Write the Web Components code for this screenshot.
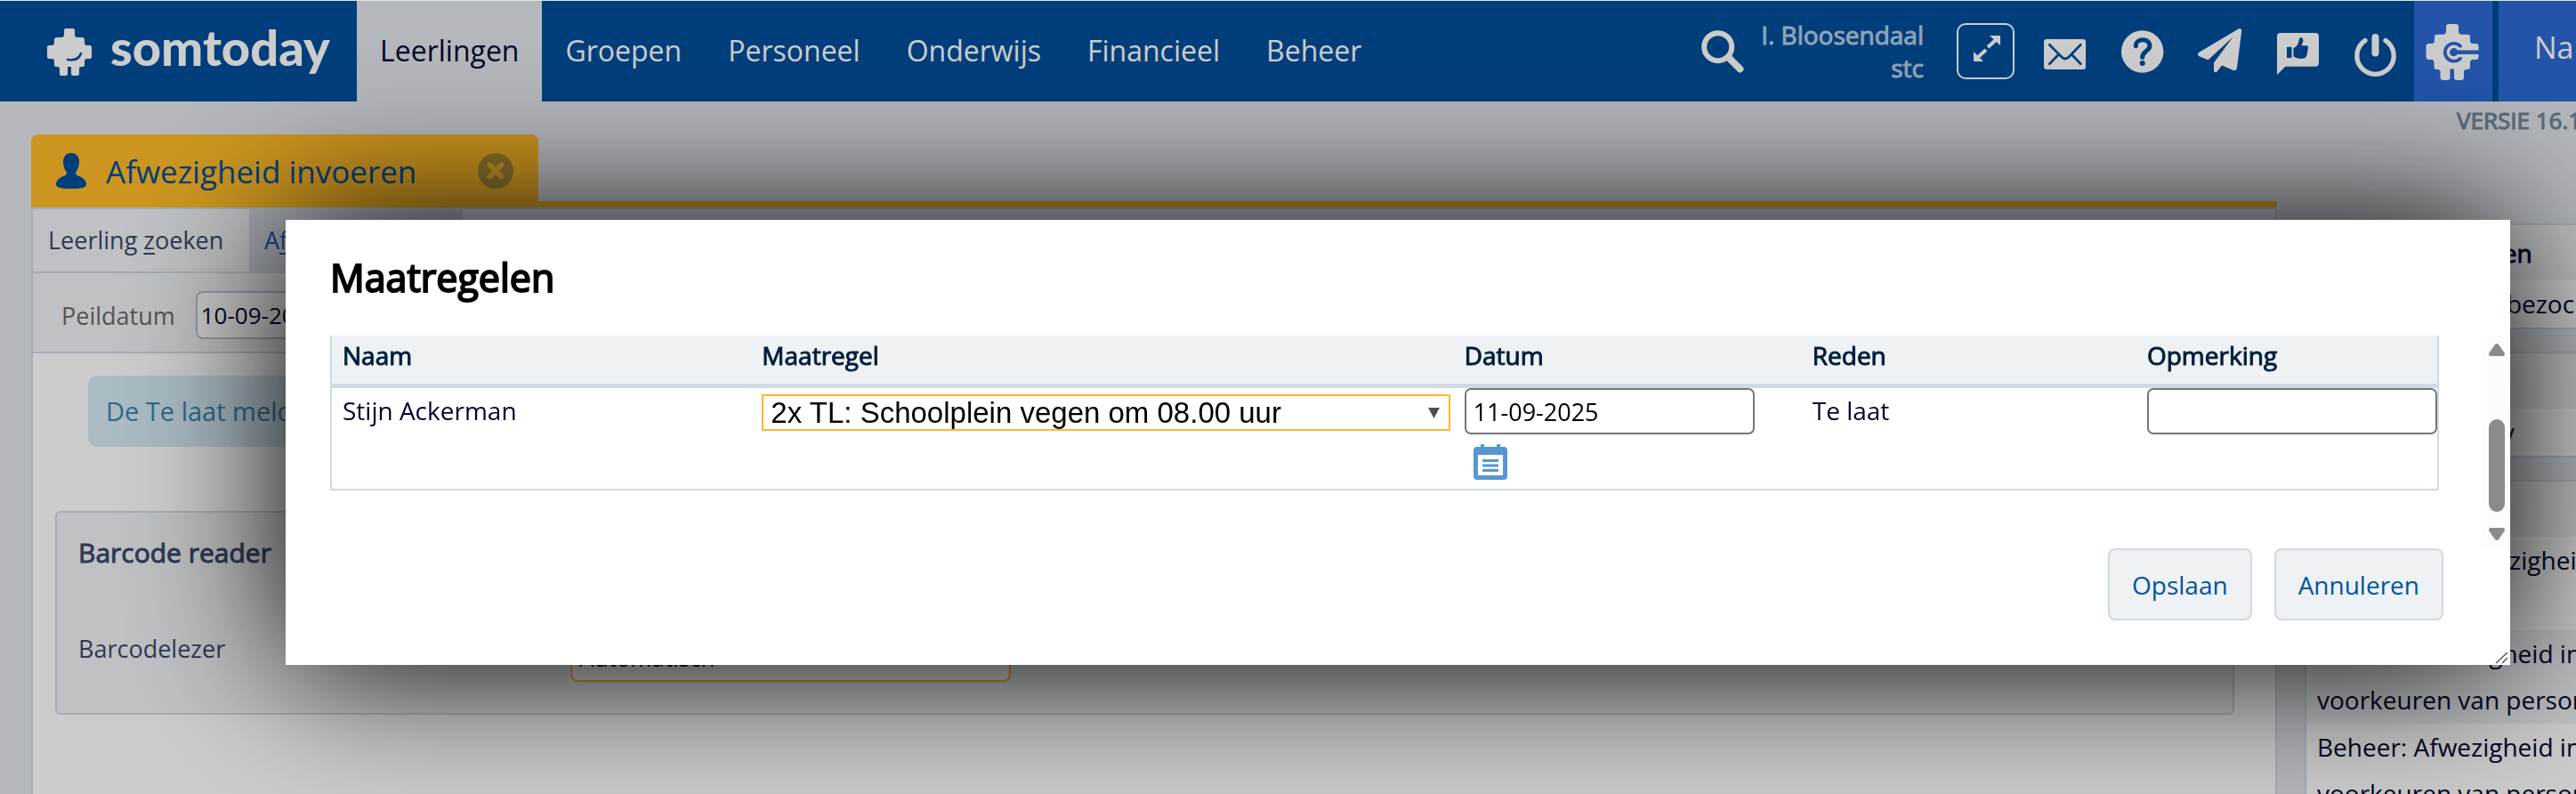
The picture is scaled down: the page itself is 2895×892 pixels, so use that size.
<!DOCTYPE html>
<html lang="nl">
<head>
<meta charset="utf-8">
<title>Somtoday - Afwezigheid invoeren</title>
<style>
    html, body {
        height: 100%;
        margin: 0;
    }
    body {
        box-sizing: border-box;
        overflow: hidden;
        border-top: 1px solid #dfe6df;
        background: #e1e6ec;
        color: #00052e;
        font-family: "Open Sans", "Noto Sans", sans-serif;
        font-size: 28px;
        --lijn: #cfd9e4;
        --vlak: #eff2f5;
        --oranje: #ffbb27;
        --blauw: #004e9a;
    }
</style>
</head>
<body>
<som-app></som-app>
<som-modal titel="Maatregelen">
    <maatregel-tabel></maatregel-tabel>
    <som-knop slot="acties">Opslaan</som-knop>
    <som-knop slot="acties">Annuleren</som-knop>
</som-modal>

<script>
// Header with logo, main menu and icon buttons
class SomHeader extends HTMLElement {
    constructor() {
        super();
        this.attachShadow({ mode: 'open' });
        const menu = ['Leerlingen', 'Groepen', 'Personeel', 'Onderwijs', 'Financieel', 'Beheer'];
        this.shadowRoot.innerHTML = `
            <style>
                :host {
                    display: flex;
                    height: 113px;
                    background: var(--blauw);
                    color: #fff;
                }
                a { color: inherit; text-decoration: none; }
                svg { display: block; overflow: visible; }
                button {
                    padding: 0;
                    border: 0;
                    background: none;
                    color: inherit;
                    cursor: pointer;
                }
                .logo {
                    display: flex;
                    align-items: center;
                    gap: 20px;
                    box-sizing: border-box;
                    width: 401px;
                    padding-left: 52px;
                    font: 900 56px/60px Lato, sans-serif;
                }
                .logo span { padding-bottom: 10px; }
                nav { display: flex; flex: 1; }
                nav a {
                    padding: 0 26px;
                    font-size: 32px;
                    line-height: 111px;
                }
                nav a.actief { background: #e1e6ec; color: #00052e; }
                .rechts { display: flex; align-items: center; }
                .gebruiker {
                    margin: 0 37px 0 19px;
                    color: #b3cce6;
                    line-height: 37px;
                    text-align: right;
                    -webkit-text-stroke: 1px;
                }
                .volledig {
                    box-sizing: border-box;
                    width: 65px;
                    height: 63px;
                    margin-right: 31px;
                    border: 2px solid #fff;
                    border-radius: 10px;
                }
                .iconen { display: flex; gap: 40px; margin-right: 18px; }
                .tegel {
                    display: flex;
                    align-items: center;
                    height: 100%;
                    background: #2c6ad4;
                }
                .naar {
                    box-sizing: border-box;
                    width: 87px;
                    margin-left: 7px;
                    padding-left: 40px;
                    overflow: hidden;
                    font-size: 34px;
                    line-height: 105px;
                    align-items: flex-start;
                }
            </style>
            <a class="logo" href="#" aria-label="somtoday">
                <svg width="52" height="64" fill="#fff">
                    <path d="M22 6h8q2 0 2 2v5q0 3 3 3h5q3 0 3 3v3q0 3 3 3h3q2 0 2 2v11q0 2-2 2h-3q-3 0-3 3v4q0 2-2 2h-2q-2 0-2 2v6q0 2-2 2h-5q-2 0-2-2v-8h-4v8q0 2-2 2h-5q-2 0-2-2v-6q0-2-2-2h-2q-2 0-2-2v-4q0-3-3-3H3q-2 0-2-2V27q0-2 2-2h3q3 0 3-3v-3q0-3 3-3h5q3 0 3-3V8q0-2 2-2z"/>
                    <path d="M24 41Q36 43 39 34" fill="none" stroke="#004e9a" stroke-width="2.5" stroke-linecap="round"/>
                </svg>
                <span>somtoday</span>
            </a>
            <nav>${menu.map((item, i) => `<a href="#" class="${i === 0 ? 'actief' : ''}">${item}</a>`).join('')}</nav>
            <div class="rechts">
                <button aria-label="Zoeken">
                    <svg width="48" height="64" fill="none" stroke="#fff">
                        <circle cx="18.7" cy="26.7" r="15.500" stroke-width="6"/>
                        <path d="M31 39l12.500 12.500" stroke-width="8" stroke-linecap="round"/>
                    </svg>
                </button>
                <div class="gebruiker">I. Bloosendaal<br>stc</div>
                <button class="volledig" aria-label="Volledig scherm">
                    <svg width="61" height="59" fill="#fff" stroke="#fff">
                        <path d="M35 12h12v11z M17 30v11h11z" stroke="none"/>
                        <path d="M33 25l10-9 M31 28l-10 9" stroke-width="4"/>
                    </svg>
                </button>
                <div class="iconen">
                    <button aria-label="Berichten">
                        <svg width="48" height="64">
                            <rect x="2" y="18" width="47" height="34" rx="3" fill="#fff"/>
                            <path d="M8.3 24.3L22 38q4 4 8 0L43.3 24.3 M18 35.7L8.3 45.7 M33.7 35.7l9.6 10" fill="none" stroke="#004e9a" stroke-width="2.7" stroke-linecap="round"/>
                        </svg>
                    </button>
                    <button aria-label="Help">
                        <svg width="48" height="64">
                            <circle cx="24.7" cy="32" r="23.7" fill="#fff"/>
                            <path d="M17.3 25.7C17.3 16.5 33 16.5 33 25.5C33 31.5 24.7 31 24.7 38.5" fill="none" stroke="#004e9a" stroke-width="5" stroke-linecap="round"/>
                            <circle cx="24.7" cy="44.9" r="3" fill="#004e9a"/>
                        </svg>
                    </button>
                    <button aria-label="Versturen">
                        <svg width="48" height="64" fill="#fff">
                            <path d="M45 6.300q4-1 3 4L43 50q-1 4-4 3l-13-5.500-6 7.500q-3 1-3-2v-8.500L38.300 15.700 12 40q-1 1.500-3 .800L0 37q-2-2 0-4z"/>
                        </svg>
                    </button>
                    <button aria-label="Feedback">
                        <svg width="48" height="64">
                            <path d="M4 11h39q4 0 4 4v29.700q0 4-4 4H9.300L0 58V15q0-4 4-4z" fill="#fff"/>
                            <path d="M11 26.700h5.500V39H11z M18.500 28.300q4-2 5.500-6l1-5q1-2 3-1 2 2 1 5l-1.500 4H33q2 0 2 2l-1.500 9q-1 3-4 3.500h-5q-3-.5-6-2.500z" fill="#004e9a"/>
                        </svg>
                    </button>
                    <button aria-label="Uitloggen">
                        <svg width="48" height="64" fill="none" stroke="#fff" stroke-linecap="round">
                            <path d="M11 19.500A20.700 20.700 0 1 0 34 19.500" stroke-width="5.300"/>
                            <path d="M22.500 16v17.500" stroke-width="8"/>
                        </svg>
                    </button>
                </div>
                <button class="tegel" aria-label="Connect">
                    <svg width="88" height="64">
                        <path d="M39 1h8q3 0 3 3v5q0 3.700 3.500 3.700H60q3 0 3 3v4q0 3.300 3.500 3.300H69q3.500 0 3.500 3v12q0 3-3.500 3h-2.500q-3.500 0-3.500 3.500V49q0 3-3 3h-1q-3 0-3 3v6q0 3-3 3h-5q-3 0-3-3v-9.500h-4.500V61q0 3-3 3h-5q-3 0-3-3v-6q0-3-3-3h-1q-3 0-3-3v-4.500q0-3.500-3.500-3.500H17q-3.500 0-3.500-3V26q0-3 3.500-3h2.500q3.500 0 3.500-3.300v-4q0-3 3-3h6.500q3.500 0 3.500-3.700V4q0-3 3-3z" fill="#fff"/>
                        <path d="M52 25.800A10 10 0 1 0 52 39.700" fill="none" stroke="#2c6ad4" stroke-width="3.700" stroke-linecap="round"/>
                        <circle cx="44.700" cy="32.700" r="4.600" fill="#2c6ad4"/>
                        <path d="M45 32.700h28" stroke="#2c6ad4" stroke-width="4.500"/>
                    </svg>
                </button>
                <a class="tegel naar" href="#">Na</a>
            </div>
        `;
    }
}
customElements.define('som-header', SomHeader);

// Box in the right column, rows come in through the slot
class ZijBlok extends HTMLElement {
    constructor() {
        super();
        this.attachShadow({ mode: 'open' });
    }

    connectedCallback() {
        this.shadowRoot.innerHTML = `
            <style>
                :host {
                    display: block;
                    margin-bottom: 25px;
                    border: 2px solid var(--lijn);
                    border-right: 0;
                    background: #fff;
                    white-space: nowrap;
                }
                h2 {
                    margin: 0;
                    padding-left: 12px;
                    background: var(--vlak);
                    font-size: 28px;
                    font-weight: 400;
                    line-height: 62px;
                    -webkit-text-stroke: 1px;
                }
                ::slotted(p) {
                    margin: 0;
                    padding: 0 0 1px 12px;
                    line-height: 52px;
                }
                ::slotted(p:nth-of-type(even)) { background: var(--vlak); }
            </style>
            <h2>${this.getAttribute('titel')}</h2>
            <slot></slot>
        `;
    }
}
customElements.define('zij-blok', ZijBlok);

class TabKop extends HTMLElement {
    constructor() {
        super();
        this.attachShadow({ mode: 'open' });
        this.shadowRoot.innerHTML = `
            <style>
                :host {
                    display: block;
                    border-bottom: 7px solid var(--oranje);
                }
                .tab {
                    display: flex;
                    align-items: center;
                    gap: 22px;
                    box-sizing: border-box;
                    width: 570px;
                    height: 75px;
                    padding: 7px 28px 0;
                    border-radius: 8px 8px 0 0;
                    background: var(--oranje);
                    color: var(--blauw);
                    font-size: 35px;
                }
                svg { display: block; }
                button {
                    margin-left: auto;
                    padding: 0;
                    border: 0;
                    background: none;
                }
            </style>
            <div class="tab">
                <svg width="34" height="40" fill="#004e9a">
                    <path d="M17 0C11 0 8 4 8 10c0 5 2 9 4 12 0 2-1 3-4 4C3 28 0 31 0 35s6 5 17 5 17-1 17-5-3-7-8-9c-3-1-4-2-4-4 2-3 4-7 4-12C26 4 23 0 17 0z"/>
                </svg>
                <slot></slot>
                <button aria-label="Sluiten">
                    <svg width="40" height="40">
                        <circle cx="20" cy="20" r="20" fill="#af8d38"/>
                        <path d="M13.500 13.500l13 13m0-13l-13 13" stroke="#efb52c" stroke-width="6" stroke-linecap="round"/>
                    </svg>
                </button>
            </div>
        `;
    }
}
customElements.define('tab-kop', TabKop);

class AfwezigheidPaneel extends HTMLElement {
    constructor() {
        super();
        this.attachShadow({ mode: 'open' });
        this.shadowRoot.innerHTML = `
            <style>
                :host {
                    display: block;
                    border: 2px solid var(--lijn);
                    border-bottom: 0;
                    background: #fff;
                    color: #3b4a68;
                    font-size: 27px;
                }
                .subtabs {
                    display: flex;
                    border-bottom: 2px solid var(--lijn);
                    background: var(--vlak);
                    line-height: 70px;
                }
                .subtabs a {
                    box-sizing: border-box;
                    width: 240px;
                    padding: 0 17px;
                    color: inherit;
                    text-decoration: none;
                }
                .subtabs a:first-child { width: 243px; }
                .subtabs a.actief {
                    background: #d3dae1;
                    color: #2a56b8;
                }
                .subtabs u { text-underline-offset: 4px; }
                .filter {
                    display: flex;
                    align-items: center;
                    gap: 23px;
                    padding: 20px 32px 14px;
                    border-bottom: 2px solid var(--lijn);
                    background: var(--vlak);
                    color: #6a6a6a;
                }
                input, select {
                    appearance: none;
                    box-sizing: border-box;
                    height: 54px;
                    border: 2px solid #b9c3d0;
                    border-radius: 8px;
                    background: #fff;
                    font: inherit;
                    font-size: 26px;
                }
                input {
                    width: 260px;
                    padding: 0 4px;
                    color: #00052e;
                }
                .melding {
                    margin: 25px 62px 72px;
                    padding: 0 20px;
                    border-radius: 10px;
                    background: #d5eaf5;
                    color: #3a87ad;
                    font-size: 29px;
                    line-height: 80px;
                }
                fieldset {
                    margin: 0 46px 0 25px;
                    padding: 25px 24px 35px;
                    border: 2px solid var(--lijn);
                    border-radius: 6px;
                    background: var(--vlak);
                }
                h3 {
                    margin: 0 0 71px;
                    font-size: 30px;
                    font-weight: 400;
                    line-height: 40px;
                    -webkit-text-stroke: 1px;
                }
                .rij {
                    display: grid;
                    grid-template-columns: 553px 495px;
                    line-height: 34px;
                }
                select {
                    padding: 0 8px;
                    border-color: var(--oranje);
                    color: #000;
                }
            </style>
            <div class="subtabs">
                <a href="#">Leerling <u>z</u>oeken</a>
                <a href="#" class="actief">A<u>f</u>wezigheid</a>
            </div>
            <div class="filter">
                <label for="peildatum">Peildatum</label>
                <input id="peildatum" value="10-09-2025">
            </div>
            <div class="melding">De Te laat meldingen</div>
            <fieldset>
                <h3>Barcode reader</h3>
                <div class="rij">
                    <label for="lezer">Barcodelezer</label>
                    <select id="lezer"><option>Automatisch</option></select>
                </div>
            </fieldset>
        `;
    }
}
customElements.define('afwezigheid-paneel', AfwezigheidPaneel);

class SomApp extends HTMLElement {
    constructor() {
        super();
        this.attachShadow({ mode: 'open' });
        this.shadowRoot.innerHTML = `
            <style>
                :host {
                    display: flex;
                    flex-direction: column;
                    height: 100%;
                }
                .pagina {
                    display: grid;
                    grid-template-columns: 1fr 305px;
                    gap: 31px;
                    flex: 1;
                    min-height: 0;
                    padding-left: 35px;
                    overflow: hidden;
                }
                main {
                    display: flex;
                    flex-direction: column;
                    padding-top: 37px;
                }
                afwezigheid-paneel { flex: 1; }
                aside { min-width: 0; }
                .versie {
                    margin-bottom: 95px;
                    padding-left: 171px;
                    overflow: hidden;
                    color: #71859a;
                    font-size: 26px;
                    line-height: 42px;
                    white-space: nowrap;
                    -webkit-text-stroke: 1px;
                }
            </style>
            <som-header></som-header>
            <div class="pagina">
                <main>
                    <tab-kop>Afwezigheid invoeren</tab-kop>
                    <afwezigheid-paneel></afwezigheid-paneel>
                </main>
                <aside>
                    <div class="versie">VERSIE 16.1</div>
                    <zij-blok titel="Recente leerlingen">
                        <p>Geen leerlingen bezocht</p>
                    </zij-blok>
                    <zij-blok titel="Nieuws">
                        <p>Nieuw Somtoday</p>
                    </zij-blok>
                    <zij-blok titel="Updates">
                        <p>Leerlingen: Afwezigheid<br>invoeren</p>
                        <p>Beheer: Afwezigheid invoeren<br>voorkeuren van personeel</p>
                        <p>Beheer: Afwezigheid invoeren<br>voorkeuren van personeel</p>
                    </zij-blok>
                </aside>
            </div>
        `;
    }
}
customElements.define('som-app', SomApp);

class SomKnop extends HTMLElement {
    constructor() {
        super();
        this.attachShadow({ mode: 'open' });
        this.shadowRoot.innerHTML = `
            <style>
                :host { display: block; }
                button {
                    height: 81px;
                    padding: 0 25px;
                    border: 2px solid #cfdae5;
                    border-radius: 8px;
                    background: #eff2f5;
                    color: #0053a0;
                    font: inherit;
                    cursor: pointer;
                }
            </style>
            <button><slot></slot></button>
        `;
    }
}
customElements.define('som-knop', SomKnop);

class MaatregelTabel extends HTMLElement {
    constructor() {
        super();
        this.attachShadow({ mode: 'open' });
        this.shadowRoot.innerHTML = `
            <style>
                :host { display: block; }
                table {
                    width: 100%;
                    table-layout: fixed;
                    border: 2px solid #cfdae5;
                    border-top: 0;
                    border-spacing: 0;
                }
                th, td {
                    padding: 0;
                    text-align: left;
                    vertical-align: top;
                }
                th:first-child, td:first-child { padding-left: 12px; }
                th {
                    padding-bottom: 10px;
                    border-bottom: 5px solid #cfdae5;
                    background: #eff2f5;
                    color: #001e3c;
                    font-weight: 400;
                    line-height: 44px;
                    -webkit-text-stroke: 1px;
                }
                td { height: 113px; line-height: 50px; }
                .keuze {
                    display: grid;
                    align-items: center;
                    margin: 7px 16px 0 0;
                }
                .keuze > * { grid-area: 1 / 1; }
                .keuze svg { justify-self: end; margin-right: 12px; pointer-events: none; }
                select {
                    appearance: none;
                    width: 100%;
                    height: 41px;
                    padding: 0 8px;
                    border: 2px solid #ffb92a;
                    border-radius: 0;
                    background: #fff;
                    color: #000;
                    font: 33px "Liberation Sans", Arial, sans-serif;
                }
                input {
                    display: block;
                    box-sizing: border-box;
                    width: 326px;
                    max-width: 100%;
                    height: 52px;
                    padding: 0 8px;
                    border: 2px solid #767676;
                    border-radius: 7px;
                    color: #000;
                    font: inherit;
                    font-size: 27px;
                }
                button {
                    display: block;
                    margin: 11px 10px 0;
                    padding: 0;
                    border: 0;
                    background: none;
                }
                button svg { display: block; }
            </style>
            <table>
                <colgroup>
                    <col style="width: 20.430%">
                    <col style="width: 33.360%">
                    <col style="width: 16.530%">
                    <col style="width: 15.900%">
                    <col>
                </colgroup>
                <thead>
                    <tr><th>Naam</th><th>Maatregel</th><th>Datum</th><th>Reden</th><th>Opmerking</th></tr>
                </thead>
                <tbody>
                    <tr>
                        <td>Stijn Ackerman</td>
                        <td>
                            <div class="keuze">
                                <select aria-label="Maatregel"><option>2x TL: Schoolplein vegen om 08.00 uur</option></select>
                                <svg width="13" height="12"><path d="M0 0h13L6.500 12z" fill="#505050"/></svg>
                            </div>
                        </td>
                        <td>
                            <input aria-label="Datum" value="11-09-2025">
                            <button aria-label="Kies datum">
                                <svg width="38" height="40">
                                    <path d="M4 3h4V0h4v3h14V0h4v3h4q4 0 4 4v29q0 4-4 4H4q-4 0-4-4V7q0-4 4-4z" fill="#5896d2"/>
                                    <path d="M5 12h28v23H5z" fill="#fff"/>
                                    <path d="M10 18.500h18M10 24h18M10 29.500h18" stroke="#5896d2" stroke-width="3"/>
                                </svg>
                            </button>
                        </td>
                        <td>Te laat</td>
                        <td><input aria-label="Opmerking"></td>
                    </tr>
                </tbody>
            </table>
        `;
    }
}
customElements.define('maatregel-tabel', MaatregelTabel);

class SomModal extends HTMLElement {
    constructor() {
        super();
        this.attachShadow({ mode: 'open' });
    }

    connectedCallback() {
        this.shadowRoot.innerHTML = `
            <style>
                :host {
                    position: fixed;
                    inset: 1px 0 0;
                    display: block;
                    padding: 246px 74px 0 321px;
                    overflow: hidden;
                    background: rgba(0, 0, 0, 0.2);
                }
                section {
                    position: relative;
                    padding: 37px 0 50px;
                    background: #fff;
                    box-shadow: 0 0 160px #000;
                }
                h1 {
                    margin: 0 0 37px;
                    padding-left: 50px;
                    color: #000;
                    font-size: 43px;
                    font-weight: 400;
                    line-height: 56px;
                    -webkit-text-stroke: 2px;
                }
                .inhoud { display: flex; height: 239px; padding-left: 50px; }
                .inhoud slot { display: block; flex: 1; }
                .schuif {
                    display: flex;
                    flex-direction: column;
                    align-items: center;
                    width: 30px;
                    margin-left: 50px;
                    background: #fcfcfc;
                }
                .schuif i {
                    width: 18px;
                    height: 104px;
                    margin: 71px 0 18px;
                    border-radius: 9px;
                    background: #8b8b8b;
                }
                .schuif svg:first-child { margin-top: 9px; }
                .acties {
                    display: flex;
                    justify-content: flex-end;
                    gap: 25px;
                    padding-right: 75px;
                }
                .greep { position: absolute; right: 2px; bottom: 1px; }
            </style>
            <section role="dialog" aria-label="${this.getAttribute('titel')}">
                <h1>${this.getAttribute('titel')}</h1>
                <div class="inhoud">
                    <slot></slot>
                    <div class="schuif">
                        <svg width="18" height="14" fill="#8b8b8b"><path d="M7 1q2-2 4 0l7 10q0 3-2 3H2q-2 0-2-3z"/></svg>
                        <i></i>
                        <svg width="18" height="14" fill="#8b8b8b"><path d="M7 13q2 2 4 0l7-10q0-3-2-3H2Q0 0 0 3z"/></svg>
                    </div>
                </div>
                <div class="acties"><slot name="acties"></slot></div>
                <svg class="greep" width="15" height="14" stroke="#555" stroke-width="1.500"><path d="M1 13L14 1M8 13l6-6"/></svg>
            </section>
        `;
    }
}
customElements.define('som-modal', SomModal);
</script>
</body>
</html>
